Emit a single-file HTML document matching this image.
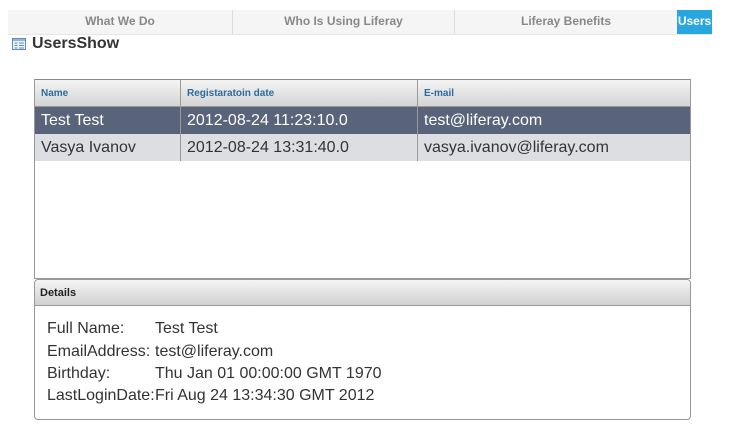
<!DOCTYPE html>
<html><head><meta charset="utf-8"><style>
body{margin:0;width:730px;height:436px;background:#fff;font-family:"Liberation Sans",Arial,sans-serif;position:relative;overflow:hidden}
.nav{position:absolute;left:8px;top:10px;width:704px;height:24px;background:#f5f5f5;border-bottom:1px solid #e6e6e6}
.nav div{position:absolute;top:0;height:24px;line-height:23px;text-align:center;font-size:12px;font-weight:bold;color:#888;}
.sep{border-right:1px solid #ddd}
.title{position:absolute;left:32px;top:35px;font-size:16px;font-weight:bold;color:#333}
.grid{position:absolute;left:34px;top:79px;width:655px;height:198px;border:1px solid #999;border-top-color:#888}
.hdr{position:absolute;left:0;top:0;width:655px;height:26px;background:linear-gradient(#f4f4f4,#d4d4d4);border-bottom:1px solid #999}
.c{position:absolute;top:0;height:100%;font-size:16px;line-height:28px;padding-left:6px;box-sizing:border-box}
.hdr .c{font-size:10px;font-weight:bold;color:#2e6b9e;line-height:27px}
.row{position:absolute;left:0;width:655px;height:27px}
.l{border-right:1px solid #999}
.det{position:absolute;left:34px;top:279px;width:655px;height:139px;border:1px solid #999;border-radius:4px}
.dh{height:25px;background:linear-gradient(#f4f4f4,#d0d0d0);border-bottom:1px solid #999;font-size:11px;font-weight:bold;color:#222;line-height:27px;padding-left:5px;border-radius:4px 4px 0 0}
.dl{position:absolute;left:12px;font-size:16px;color:#333}
.dv{position:absolute;left:120px;font-size:16px;color:#333}
</style></head><body>
<div class="nav">
<div class="sep" style="left:0;width:224px">What We Do</div>
<div class="sep" style="left:225px;width:221px">Who Is Using Liferay</div>
<div style="left:447px;width:222px">Liferay Benefits</div>
<div style="left:669px;width:35px;background:#27a6e0;color:#fff">Users</div>
</div>
<svg style="position:absolute;left:12px;top:38px" width="14" height="12" viewBox="0 0 14 12"><rect x=".5" y=".5" width="13" height="11" fill="#eef4fb" stroke="#5a8cc8"/><rect x="1" y="1" width="12" height="2" fill="#8fb4e0"/><path d="M2.5 5h3M2.5 7.5h3M2.5 10h3M7 5h5M7 7.5h5M7 10h5" stroke="#5a8cc8"/></svg>
<div class="title">UsersShow</div>
<div class="grid">
<div class="hdr"><div class="c l" style="left:0;width:146px">Name</div><div class="c l" style="left:146px;width:237px">Registaratoin date</div><div class="c" style="left:383px;width:272px">E-mail</div></div>
<div class="row" style="top:27px;background:#596379;color:#fff"><div class="c l" style="left:0;width:146px">Test Test</div><div class="c l" style="left:146px;width:237px">2012-08-24 11:23:10.0</div><div class="c" style="left:383px;width:272px">test@liferay.com</div></div>
<div class="row" style="top:54px;background:#dcdee2;color:#333"><div class="c l" style="left:0;width:146px">Vasya Ivanov</div><div class="c l" style="left:146px;width:237px">2012-08-24 13:31:40.0</div><div class="c" style="left:383px;width:272px">vasya.ivanov@liferay.com</div></div>
</div>
<div class="det"><div class="dh">Details</div>
<div class="dl" style="top:40px">Full Name:</div><div class="dv" style="top:40px">Test Test</div>
<div class="dl" style="top:63px">EmailAddress:</div><div class="dv" style="top:63px">test@liferay.com</div>
<div class="dl" style="top:85px">Birthday:</div><div class="dv" style="top:85px">Thu Jan 01 00:00:00 GMT 1970</div>
<div class="dl" style="top:107px">LastLoginDate:</div><div class="dv" style="top:107px">Fri Aug 24 13:34:30 GMT 2012</div>
</div>
</body></html>
